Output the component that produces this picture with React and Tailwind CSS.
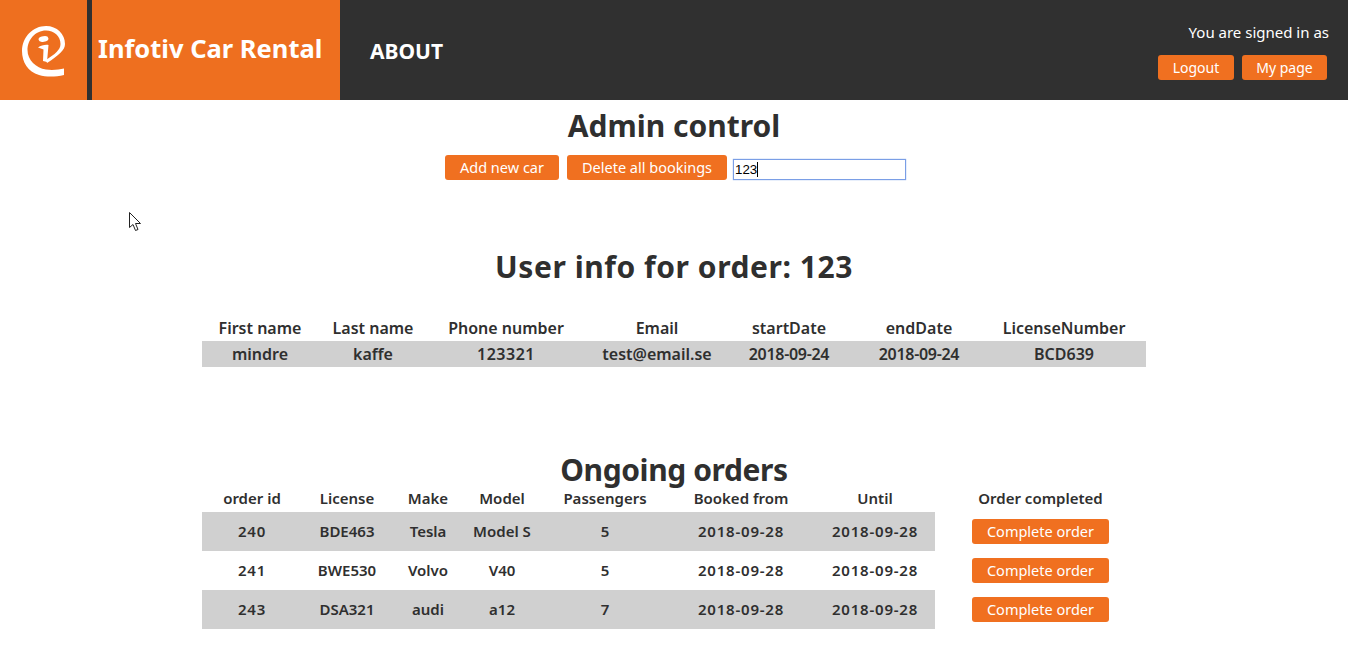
const font = '[font-family:"Noto_Sans",sans-serif]';

const userHeaders = ['First name', 'Last name', 'Phone number', 'Email', 'startDate', 'endDate', 'LicenseNumber'];
const userRow = ['mindre', 'kaffe', '123321', 'test@email.se', '2018-09-24', '2018-09-24', 'BCD639'];
const userWidths = ['w-[116px]', 'w-[110px]', 'w-[156px]', 'w-[146px]', 'w-[118px]', 'w-[142px]', 'w-[156px]'];

const orderHeaders = ['order id', 'License', 'Make', 'Model', 'Passengers', 'Booked from', 'Until'];
const orderWidths = ['w-[100px]', 'w-[90px]', 'w-[72px]', 'w-[76px]', 'w-[130px]', 'w-[142px]', 'w-[123px]'];
const orders = [
  ['240', 'BDE463', 'Tesla', 'Model S', '5', '2018-09-28', '2018-09-28'],
  ['241', 'BWE530', 'Volvo', 'V40', '5', '2018-09-28', '2018-09-28'],
  ['243', 'DSA321', 'audi', 'a12', '7', '2018-09-28', '2018-09-28'],
];

function OrangeButton({ children, className = '' }) {
  return (
    <button className={`bg-[#f07020] text-white text-[14.5px] rounded-[3px] h-[25px] leading-none ${className}`}>
      {children}
    </button>
  );
}

function Logo() {
  return (
    <svg className="ml-[3px]" width="60" height="60" viewBox="15 20 60 60" fill="white">
      <path d="M64 75 C55 77 46 77 39 75 C28 72 22 62 22 51 C22 37 33 26 46 26 C57 26 65 34 65 44 C65 50 59 55 47 63 L46 60 C55 54 60.5 50 60.5 44 C60.5 36 54 30.5 46 30.5 C35 30.5 27.5 40 27.5 50 C27.5 60 36 68 46 69.5 C53 70.5 59 69.5 64 68.5 Z" />
      <path d="M38 47.5 C41 45.5 45 44.5 48.5 45 L47 62 L43 61 L43.5 49.5 Z" />
      <ellipse cx="43.5" cy="39" rx="5" ry="2.8" transform="rotate(-10 43.5 39)" />
    </svg>
  );
}

function Cursor() {
  return (
    <svg className="absolute left-[129px] top-[212px]" width="13" height="20" viewBox="0 0 13 20">
      <path d="M0.5 0.5 L0.5 15.5 L4 12.5 L6.5 18.5 L9 17.5 L6.5 11.5 L11.5 11.5 Z" fill="white" stroke="#222" strokeWidth="1" />
    </svg>
  );
}

export default function App() {
  return (
    <div className={`relative min-h-[662px] bg-white text-[#2f2f2f] ${font}`}>
      {/* Header */}
      <header className="flex h-[100px] bg-[#303030] text-white">
        <div className="flex w-[87px] items-center justify-center bg-[#ee6f1f]">
          <Logo />
        </div>
        <div className="ml-[5px] flex w-[248px] items-center bg-[#ee6f1f] pl-[6px] pb-[3px]">
          <span className="text-[25.5px] font-bold">Infotiv Car Rental</span>
        </div>
        <a className="ml-[30px] self-center pt-[4px] text-[21px] font-bold">ABOUT</a>
        <div className="ml-auto flex flex-col items-end pr-[19px] pt-[21px]">
          <span className="text-[15px] leading-[22px]">You are signed in as</span>
          <div className="mt-[12px] mr-[2px] flex gap-2">
            <OrangeButton className="w-[76px] !text-[14px]">Logout</OrangeButton>
            <OrangeButton className="w-[85px] !text-[14px]">My page</OrangeButton>
          </div>
        </div>
      </header>

      <main className="flex flex-col items-center">
        <h1 className="h-[55px] pt-[6px] text-[30px] font-bold leading-[40px]">Admin control</h1>
        <div className="ml-[3px] flex items-end gap-2">
          <OrangeButton className="w-[114px]">Add new car</OrangeButton>
          <OrangeButton className="w-[160px]">Delete all bookings</OrangeButton>
          <div className="relative -ml-[2px]">
            <input readOnly value="123" className="block h-[21px] w-[173px] border border-[#7a9ee6] bg-white px-[1px] text-[13.33px] text-black shadow-[0_0_1px_#7a9ee6] outline-none [font-family:'Liberation_Sans',sans-serif]" />
            <span className="absolute left-[24px] top-[3px] h-[15px] w-px bg-black" />
          </div>
        </div>

        <h2 className="mt-[67px] text-[30px] font-bold leading-[40px] tracking-[0.55px]">User info for order: 123</h2>

        <table className="mt-[28px] w-[944px] table-fixed border-collapse text-center text-[16px] font-semibold">
          <thead>
            <tr className="h-[26px]">
              {userHeaders.map((h, i) => (
                <th key={h} className={`${userWidths[i]} p-0 pb-[1px] font-semibold ${i === 6 ? 'pr-[8px]' : ''}`}>{h}</th>
              ))}
            </tr>
          </thead>
          <tbody>
            <tr className="h-[26px] bg-[#d0d0d0]">
              {userRow.map((c, i) => (
                <td key={i} className={`p-0 ${i === 6 ? 'pr-[8px]' : ''} ${i === 2 ? 'tracking-[0.5px]' : ''} ${i === 4 || i === 5 ? 'tracking-[-0.3px]' : ''}`}>{c}</td>
              ))}
            </tr>
          </tbody>
        </table>

        <h2 className="mt-[83px] text-[30px] font-bold leading-[40px] tracking-[-0.4px]">Ongoing orders</h2>

        <table className="-mt-[3px] w-[944px] table-fixed border-collapse text-center text-[15px] font-semibold">
          <thead>
            <tr className="h-[25px]">
              {orderHeaders.map((h, i) => (
                <th key={h} className={`${orderWidths[i]} p-0 pb-[2px] font-semibold ${i === 6 ? 'pl-[3px]' : ''}`}>{h}</th>
              ))}
              <th className="p-0 pb-[2px] font-semibold">Order completed</th>
            </tr>
          </thead>
          <tbody>
            {orders.map((row, r) => (
              <tr key={row[0]} className="h-[39px]">
                {row.map((c, i) => (
                  <td key={i} className={`p-0 ${r % 2 === 0 ? 'bg-[#d0d0d0]' : ''} ${i === 6 ? 'pl-[3px]' : ''} ${i === 5 || i === 6 ? 'tracking-[0.8px]' : ''} ${i === 0 ? 'tracking-[0.8px]' : ''}`}>{c}</td>
                ))}
                <td className="p-0">
                  <OrangeButton className="w-[137px] font-normal">Complete order</OrangeButton>
                </td>
              </tr>
            ))}
          </tbody>
        </table>
      </main>

      <Cursor />
    </div>
  );
}
